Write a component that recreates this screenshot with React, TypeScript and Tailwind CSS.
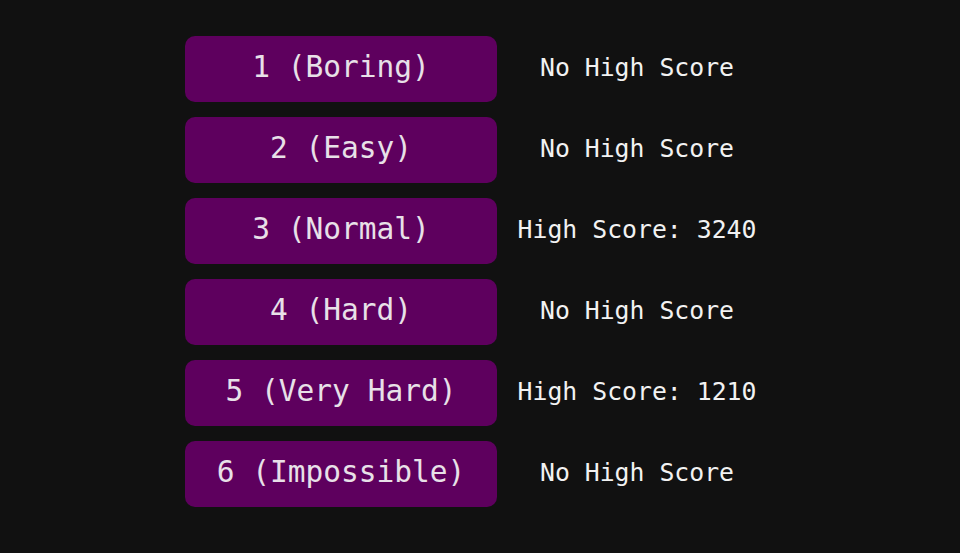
import React from 'react'

interface Level {
  label: string
  highScore?: number
}

const levels: Level[] = [
  { label: '1 (Boring)' },
  { label: '2 (Easy)' },
  { label: '3 (Normal)', highScore: 3240 },
  { label: '4 (Hard)' },
  { label: '5 (Very Hard)', highScore: 1210 },
  { label: '6 (Impossible)' },
]

export default function App() {
  return (
    <div
      className="w-[960px] h-[553px] bg-[#111111] flex justify-center pt-[36px]"
      style={{ fontFamily: '"DejaVu Sans Mono", "Liberation Mono", monospace' }}
    >
      <div className="flex flex-col gap-[15px] ml-[2px]">
        {levels.map((level) => (
          <div key={level.label} className="flex items-center">
            <button className="w-[312px] h-[66px] rounded-[10px] bg-[#5e005e] text-[#e8e0e8] text-[29.5px] leading-none pb-[2px] flex items-center justify-center">
              {level.label}
            </button>
            <span className="w-[280px] text-center text-[24.8px] leading-none pb-[2px] text-[#f2f2f2]">
              {level.highScore !== undefined ? `High Score: ${level.highScore}` : 'No High Score'}
            </span>
          </div>
        ))}
      </div>
    </div>
  )
}
